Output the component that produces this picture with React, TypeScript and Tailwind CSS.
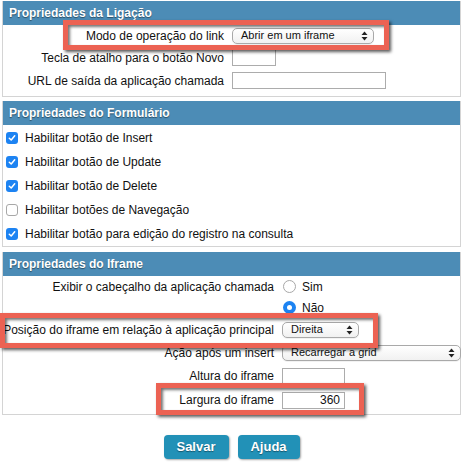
import React from "react";

function Arrows() {
  return (
    <svg width="7" height="10" viewBox="0 0 7 10">
      <path d="M3.5 0.5 L6.5 4 L0.5 4 Z" fill="#222" />
      <path d="M3.5 9.5 L6.5 6 L0.5 6 Z" fill="#222" />
    </svg>
  );
}

function Select({ value, width }: { value: string; width: string }) {
  return (
    <div
      className={`${width} h-[16px] flex items-center justify-between pl-[8px] pr-[5px] border border-[#a9a9a9] rounded-[5px] bg-gradient-to-b from-white to-[#f1f1f1] text-[11px] leading-none shadow-[0_1px_0_rgba(0,0,0,0.05)]`}
    >
      <span>{value}</span>
      <Arrows />
    </div>
  );
}

function Checkbox({ checked }: { checked: boolean }) {
  if (!checked) {
    return <span className="w-[12px] h-[12px] rounded-[3px] border border-[#a8a8a8] bg-white shrink-0" />;
  }
  return (
    <span className="w-[12px] h-[12px] rounded-[3px] bg-[#1d83f2] flex items-center justify-center shrink-0">
      <svg width="8" height="8" viewBox="0 0 8 8">
        <path d="M1.3 4.2 L3.2 6 L6.7 1.8" stroke="white" strokeWidth="1.5" fill="none" strokeLinecap="round" strokeLinejoin="round" />
      </svg>
    </span>
  );
}

function Radio({ checked }: { checked: boolean }) {
  if (!checked) {
    return <span className="w-[13px] h-[13px] rounded-full border border-[#a8a8a8] bg-white shrink-0" />;
  }
  return (
    <span className="w-[13px] h-[13px] rounded-full bg-[#1d83f2] flex items-center justify-center shrink-0">
      <span className="w-[5px] h-[5px] rounded-full bg-white" />
    </span>
  );
}

function Header({ title }: { title: string }) {
  return (
    <div className="h-[24px] bg-[#4c8cb6] text-white font-bold text-[12px] leading-[24px] pl-[6px] [text-shadow:0_1px_1px_rgba(0,0,0,0.45)]">
      {title}
    </div>
  );
}

function Highlight({ className }: { className: string }) {
  return (
    <div
      className={`absolute border-[5px] border-[#ec6253] shadow-[2px_2px_3px_rgba(0,0,0,0.65),inset_2px_2px_3px_rgba(0,0,0,0.55)] pointer-events-none ${className}`}
    />
  );
}

const checks = [
  { label: "Habilitar botão de Insert", checked: true },
  { label: "Habilitar botão de Update", checked: true },
  { label: "Habilitar botão de Delete", checked: true },
  { label: "Habilitar botões de Navegação", checked: false },
  { label: "Habilitar botão para edição do registro na consulta", checked: true },
];

export default function App() {
  return (
    <div className="relative w-[463px] h-[470px] bg-white pt-[1px] px-[2px] text-[12px] text-[#111] font-['Liberation_Sans',Arial,sans-serif]">
      {/* Ligação */}
      <div className="border-x border-b border-[#d4d4d4]">
        <Header title="Propriedades da Ligação" />
        <div className="grid grid-cols-[229px_1fr] pb-[4px]">
          <div className="h-[21px] flex items-center justify-end pr-[8px] whitespace-nowrap">Modo de operação do link</div>
          <div className="h-[21px] flex items-center">
            <Select value="Abrir em um iframe" width="w-[142px]" />
          </div>
          <div className="h-[23px] flex items-center justify-end pr-[8px] whitespace-nowrap">Tecla de atalho para o botão Novo</div>
          <div className="h-[23px] flex items-center">
            <div className="w-[44px] h-[17px] border border-[#acacac]" />
          </div>
          <div className="h-[23px] flex items-center justify-end pr-[8px] whitespace-nowrap">URL de saída da aplicação chamada</div>
          <div className="h-[23px] flex items-center">
            <div className="w-[154px] h-[17px] border border-[#acacac]" />
          </div>
        </div>
      </div>

      {/* Formulário */}
      <div className="mt-[4px] border-x border-b border-[#d4d4d4]">
        <Header title="Propriedades do Formulário" />
        <div className="pt-[1px]">
          {checks.map((c) => (
            <div key={c.label} className="h-[24px] flex items-center gap-[7px] pl-[3px]">
              <Checkbox checked={c.checked} />
              <span>{c.label}</span>
            </div>
          ))}
        </div>
      </div>

      {/* Iframe */}
      <div className="mt-[5px] border-x border-b border-[#d4d4d4]">
        <Header title="Propriedades do Iframe" />
        <div className="grid grid-cols-[279px_1fr] pb-[2px]">
          <div className="h-[21px] flex items-center justify-end pr-[8px] whitespace-nowrap">Exibir o cabeçalho da aplicação chamada</div>
          <div className="flex flex-col">
            <div className="h-[21px] flex items-center gap-[6px] pl-[1px]">
              <Radio checked={false} />
              <span>Sim</span>
            </div>
            <div className="h-[21px] flex items-center gap-[6px] pl-[1px]">
              <Radio checked={true} />
              <span>Não</span>
            </div>
          </div>
          <div className="h-[23px] flex items-center justify-end pr-[8px] whitespace-nowrap">Posição do iframe em relação à aplicação principal</div>
          <div className="h-[23px] flex items-center">
            <Select value="Direita" width="w-[77px]" />
          </div>
          <div className="h-[23px] flex items-center justify-end pr-[8px] whitespace-nowrap">Ação após um insert</div>
          <div className="h-[23px] flex items-center">
            <Select value="Recarregar a grid" width="w-[179px]" />
          </div>
          <div className="h-[24px] flex items-center justify-end pr-[8px] whitespace-nowrap">Altura do iframe</div>
          <div className="h-[24px] flex items-center">
            <div className="w-[63px] h-[17px] border border-[#acacac]" />
          </div>
          <div className="h-[24px] flex items-center justify-end pr-[8px] whitespace-nowrap">Largura do iframe</div>
          <div className="h-[24px] flex items-center">
            <div className="w-[63px] h-[17px] border border-[#acacac] text-right pr-[4px] leading-[15px]">360</div>
          </div>
        </div>
      </div>

      <div className="mt-[20px] flex justify-center gap-[9px]">
        <button className="w-[65px] h-[24px] rounded-[4px] bg-[#2291b7] text-white font-bold text-[13px] shadow-[1px_1px_2px_rgba(0,0,0,0.35)] [text-shadow:0_1px_1px_rgba(0,0,0,0.4)]">
          Salvar
        </button>
        <button className="w-[62px] h-[24px] rounded-[4px] bg-[#2291b7] text-white font-bold text-[13px] shadow-[1px_1px_2px_rgba(0,0,0,0.35)] [text-shadow:0_1px_1px_rgba(0,0,0,0.4)]">
          Ajuda
        </button>
      </div>

      <Highlight className="left-[63px] top-[20px] w-[326px] h-[30px]" />
      <Highlight className="left-[0px] top-[313px] w-[378px] h-[35px]" />
      <Highlight className="left-[156px] top-[383px] w-[208px] h-[32px]" />
    </div>
  );
}
